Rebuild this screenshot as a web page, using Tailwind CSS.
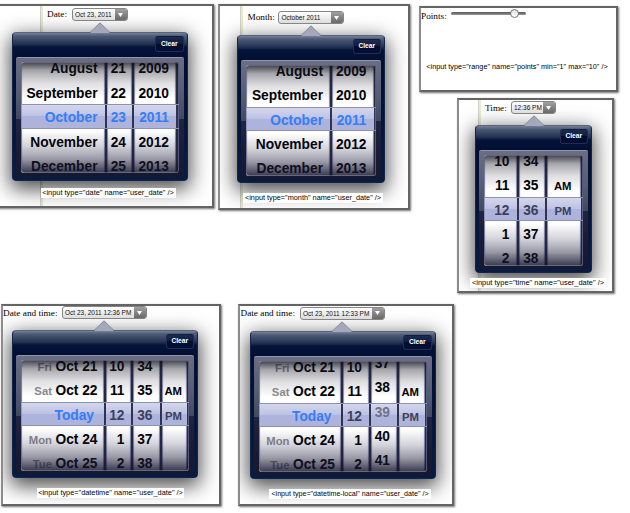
<!DOCTYPE html>
<html lang="en">
<head>
<meta charset="utf-8">
<title>Input types</title>
<script src="https://cdn.jsdelivr.net/npm/@tailwindcss/browser@4"></script>
</head>
<body class="bg-white">
<main id="board" class="relative h-[513px] w-[630px] overflow-hidden bg-white font-['Liberation_Sans',Arial,sans-serif] text-black"></main>
<script>
const months = ['August', 'September', 'October', 'November', 'December'];
const days = [['Fri', 'Oct 21'], ['Sat', 'Oct 22'], ['', 'Today'], ['Mon', 'Oct 24'], ['Tue', 'Oct 25']];
const hours = ['10', '11', '12', '1', '2'];
const ampm = ['', 'AM', 'PM', '', ''];
const BLUE = 'text-[#2b7cfa]', DARK = 'text-[#33374c]', GREY = 'text-[#6c7085]';

// x, y, w, h: card box. Field, picker and code positions are offsets inside the card.
const cards = [
  { x: -3, y: 4, w: 217, h: 204, gutter: 43, label: 'Date:', lx: 50, ly: 4.4, field: [74.5, 4, 56.5], value: 'Oct 23, 2011',
    pick: [15, 28, 175.5], tip: 88, code: '<input type="date" name="user_date" />', cx: 43.5, cy: 183.5, cw: 135, cs: 7.4,
    cols: [{ w: 86, pad: 9.5, items: months, on: BLUE }, { w: 27, pad: 8, items: ['21', '22', '23', '24', '25'], on: BLUE }, { w: 44, pad: 7, items: ['2009', '2010', '2011', '2012', '2013'], on: BLUE }] },
  { x: 218, y: 4, w: 192, h: 205.5, gutter: 22, label: 'Month:', lx: 29.5, ly: 7, field: [60, 7, 66], value: 'October 2011',
    pick: [19, 30.5, 148], tip: 74, code: '<input type="month" name="user_date" />', cx: 25, cy: 189, cw: 140, cs: 7.3,
    cols: [{ w: 86, pad: 9, items: months, on: BLUE }, { w: 43.5, pad: 7, items: ['2009', '2010', '2011', '2012', '2013'], on: BLUE }] },
  { x: 419, y: 6, w: 199, h: 85.5, label: 'Points:', lx: 2, ly: 3.5, range: true,
    code: '<input type="range" name="points" min="1" max="10" />', cx: 5.5, cy: 56, cw: 185, cs: 7.28 },
  { x: 456.5, y: 98, w: 157.5, h: 195, gutter: 21, label: 'Time:', lx: 28.5, ly: 3.5, field: [54, 3, 45.5], value: '12:36 PM',
    pick: [18.5, 26.5, 117], tip: 58.5, code: '<input type="time" name="user_date" />', cx: 13.5, cy: 180, cw: 136, cs: 7.45,
    cols: [{ w: 34.5, pad: 9, items: hours, on: DARK }, { w: 28.5, pad: 8.5, items: ['34', '35', '36', '37', '38'], on: DARK }, { w: 35.5, pad: 9, items: ampm, on: DARK, small: true }] },
  { x: 1, y: 304, w: 220, h: 201.5, label: 'Date and time:', lx: 2, ly: 2.5, field: [60.5, 2, 85.5], value: 'Oct 23, 2011 12:36 PM',
    pick: [11, 25.5, 186], tip: 92, code: '<input type="datetime" name="user_date" />', cx: 36, cy: 184, cw: 147, cs: 7.35,
    cols: [{ w: 84.5, pad: 8, items: days, on: BLUE }, { w: 27.5, pad: 8.5, items: hours, on: DARK }, { w: 28.5, pad: 9, items: ['34', '35', '36', '37', '38'], on: DARK }, { w: 27.5, pad: 5, items: ampm, on: DARK, small: true }] },
  { x: 238, y: 304, w: 215.5, h: 201.5, label: 'Date and time:', lx: 2.5, ly: 3, field: [61.5, 2.5, 85.5], value: 'Oct 23, 2011 12:33 PM',
    pick: [11.5, 26.5, 186], tip: 92.5, code: '<input type="datetime-local" name="user_date" />', cx: 31, cy: 185, cw: 162, cs: 7.12,
    cols: [{ w: 84.5, pad: 8, items: days, on: BLUE }, { w: 27.5, pad: 8.5, items: hours, on: DARK }, { w: 28, pad: 8.5, items: ['37', '38', '39', '40', '41'], on: GREY, shift: -4 }, { w: 28, pad: 5.5, items: ampm, on: DARK, small: true }] }
];

const esc = s => s.replace(/&/g, '&amp;').replace(/</g, '&lt;').replace(/>/g, '&gt;');

function row(item, i, col) {
  const color = i === 2 ? col.on : 'text-black';
  const body = Array.isArray(item)
    ? `<span class="mr-[3.5px] text-[11.3px] text-[#8d8d92]">${item[0]}</span><span${item[1] === 'Today' ? ' class="mr-[3.5px]"' : ''}>${item[1]}</span>`
    : item;
  return `<div class="flex h-[24.4px] shrink-0 items-baseline justify-end leading-[24.4px] ${color}">${body}</div>`;
}

function wheel(col) {
  return `<div class="relative h-full shrink-0 overflow-hidden border-r-2 border-[#242942] bg-white shadow-[inset_1px_0_1px_#8588ad,inset_-1px_0_1px_#8588ad] last:border-r-0" style="width:${col.w}px">
    <div class="absolute inset-x-0 top-[42px] h-[24.5px] bg-[linear-gradient(to_bottom,#dfe1f0_0,#c3c8e6_48%,#b1b7de_50%,#b2b7db_100%)]"></div>
    <div class="relative flex flex-col whitespace-nowrap font-bold ${col.small ? 'text-[11.3px]' : 'text-[13.75px]'}" style="padding-right:${col.pad - 2 + (col === col.last ? 2 : 0)}px;margin-top:${-4.6 + (col.shift || 0)}px">${col.items.map((t, i) => row(t, i, col)).join('')}</div>
  </div>`;
}

function picker(c) {
  const [x, y, w] = c.pick;
  return `<div class="absolute h-[148.5px] rounded-[4px] shadow-[0_6px_20px_2px_rgba(0,0,0,0.7)]" style="left:${x}px;top:${y}px;width:${w}px">
    <svg class="absolute -top-[10px] h-[11px] w-[22px]" style="left:${c.tip - 11}px" viewBox="0 0 22 11"><path d="M1 11 11 .8 21 11Z" fill="#a3a9ba"/><path d="M1 10.5 11 .8 21 10.5" fill="none" stroke="#727989" stroke-width=".8"/></svg>
    <div class="flex h-full flex-col rounded-[4px] border border-[#14254a] border-t-[#596478] bg-[linear-gradient(to_bottom,#77819a_0,#4d5b77_3px,#223252_11px,#061439_14px,#020e33_25px,#0a1b42_100%)] px-[3px] pb-[3px]">
      <div class="flex h-[24px] shrink-0 items-start justify-end pt-[3px]">
        <div class="flex h-[15.5px] w-[28.5px] items-center justify-center rounded-[3px] border border-[#1f2d50] border-t-[#101c3a] bg-[linear-gradient(to_bottom,#1c2b50_0,#0d1b40_50%,#020c30_50%,#050f36_100%)] text-[6.7px] font-bold text-white">Clear</div>
      </div>
      <div class="relative flex min-h-0 flex-1 flex-col rounded-[2px] border-t border-[#9195a6] bg-[linear-gradient(to_bottom,#696e84_0,#565c74_30%,#414862_51%,#1f2440_51%,#191b35_80%,#141830_100%)] px-[5px] pt-[4px]">
        <div class="relative flex h-[111px] overflow-hidden rounded-[3px] bg-[#242942]">
          ${c.cols.map(wheel).join('')}
          <div class="absolute inset-0 rounded-[3px] border border-[#787b99]/60 bg-[linear-gradient(to_bottom,rgba(15,15,28,0.75)_0,rgba(30,30,45,0.4)_7%,rgba(50,50,70,0.16)_18%,rgba(255,255,255,0)_32%,rgba(255,255,255,0)_62%,rgba(40,40,75,0.2)_76%,rgba(30,30,60,0.45)_88%,rgba(20,20,45,0.82)_100%)]"></div>
        </div>
        <div class="absolute inset-x-[5px] top-[46px] h-[24.5px] border-y border-[#8a93b4] bg-[#8f98d8]/10"></div>
      </div>
    </div>
  </div>`;
}

function field(c) {
  const [x, y, w] = c.field;
  return `<div class="absolute flex h-[13px] overflow-hidden rounded-[3px] border border-[#858585] bg-[linear-gradient(to_bottom,#ffffff,#dcdcdc)]" style="left:${x}px;top:${y}px;width:${w}px">
    <span class="flex-1 whitespace-nowrap pl-[2.5px] text-[6.5px] leading-[12.5px] text-[#111]">${c.value}</span>
    <span class="flex w-[12.5px] items-center justify-center bg-[linear-gradient(to_bottom,#a0a0a0,#686868)]"><svg class="h-[4px] w-[5px]" viewBox="0 0 5 4"><path d="M0 0H5L2.5 4Z" fill="#fff"/></svg></span>
  </div>`;
}

function range() {
  return `<div class="absolute left-[31.5px] top-[5.5px] flex h-[3px] w-[75px] items-center rounded-full bg-linear-to-b from-[#555] to-[#999]">
    <span class="ml-[59px] size-[9px] shrink-0 rounded-full border border-[#777] bg-linear-to-b from-[#ddd] to-white"></span>
  </div>`;
}

document.getElementById('board').innerHTML = cards.map(c => {
  if (c.cols) { const l = c.cols[c.cols.length - 1]; l.last = l; }
  return `<section class="absolute overflow-hidden bg-white shadow-[1px_1px_2px_rgba(0,0,0,0.55)]" style="left:${c.x}px;top:${c.y}px;width:${c.w}px;height:${c.h}px">
    ${c.gutter ? `<div class="absolute inset-y-0 w-[3px] border-l border-[#d2d2cc] bg-[#e8ecca]" style="left:${c.gutter}px"></div>` : ''}
    ${c.cols ? picker(c) : ''}
    <div class="absolute whitespace-nowrap font-['Liberation_Serif',serif] text-[9.25px] leading-[12px]" style="left:${c.lx}px;top:${c.ly}px">${c.label}</div>
    ${c.range ? range() : field(c)}
    <div class="absolute h-[10px] whitespace-nowrap bg-white text-center leading-[10px]" style="left:${c.cx}px;top:${c.cy}px;width:${c.cw}px;font-size:${c.cs}px">${esc(c.code)}</div>
    <div class="absolute inset-0 border-2 border-[#646464] border-l-[#8c8c8c]"></div>
  </section>`;
}).join('');
</script>
</body>
</html>
